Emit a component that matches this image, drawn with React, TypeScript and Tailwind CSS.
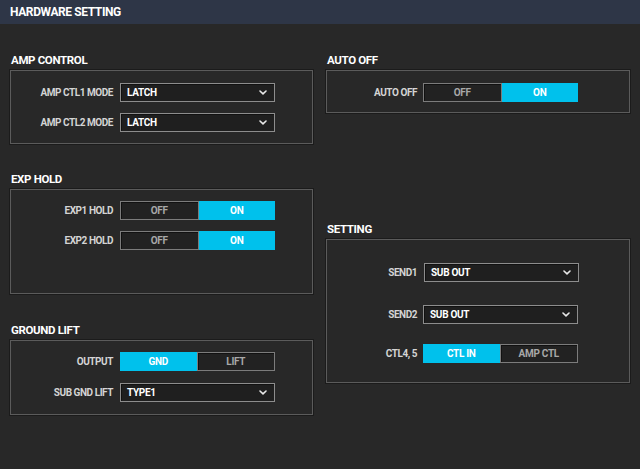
import { ReactNode } from 'react'

const FONT = "font-['Roboto','Liberation_Sans',sans-serif]"

function Chevron() {
  return (
    <svg width="8" height="5" viewBox="0 0 8 5" className="shrink-0">
      <path d="M1 1 L4 3.8 L7 1" fill="none" stroke="#e8e8e8" strokeWidth="1.6" strokeLinecap="round" strokeLinejoin="round" />
    </svg>
  )
}

function Select({ value }: { value: string }) {
  return (
    <div className="flex h-[19px] w-[155px] items-center justify-between border border-[#8d8d8d] bg-[#1f1f1f] pr-[7px] pl-[6px] shadow-[inset_1px_1px_0_#111]">
      <span className="text-[10px] font-bold tracking-[-0.3px] text-white">{value}</span>
      <Chevron />
    </div>
  )
}

function Toggle({ left, right, active }: { left: string; right: string; active: 'left' | 'right' }) {
  const on = 'bg-[#00c1ec] text-white'
  const off = 'border border-[#7c7c7c] bg-[#222] text-[#a8a8a8] shadow-[inset_1px_1px_0_#111]'
  return (
    <div className="flex h-[19px] w-[155px] text-[10px] font-bold tracking-[-0.3px]">
      <div className={`flex flex-1 items-center justify-center ${active === 'left' ? on : off}`}>{left}</div>
      <div className={`flex flex-1 items-center justify-center ${active === 'right' ? on : off}`}>{right}</div>
    </div>
  )
}

function Row({ label, labelW, children, className = '' }: { label: string; labelW: string; children: ReactNode; className?: string }) {
  return (
    <div className={`flex items-center ${className}`}>
      <div className={`${labelW} text-right text-[10px] font-bold tracking-[-0.45px] text-[#d4d4d4]`}>{label}</div>
      {children}
    </div>
  )
}

function Section({ title, boxClass, children, className = '' }: { title: string; boxClass: string; children: ReactNode; className?: string }) {
  return (
    <div className={className}>
      <div className="h-[17px] pl-px text-[11.5px] leading-[15px] font-bold tracking-[-0.35px] text-white">{title}</div>
      <div className={`border border-[#5b5b5b] shadow-[0_0_0_1px_#1b1b1b] ${boxClass}`}>{children}</div>
    </div>
  )
}

export default function App() {
  return (
    <div className={`h-[469px] w-[640px] bg-[#282828] ${FONT}`}>
      <div className="flex h-[24px] items-center bg-[#2e3647] pl-[10px] text-[12px] font-bold tracking-[-0.4px] text-white">
        HARDWARE SETTING
      </div>
      <div className="flex gap-[13px] px-[10px] pt-[29px]">
        <div className="w-[303px]">
          <Section title="AMP CONTROL" boxClass="h-[74px] pt-[12px]">
            <Row label="AMP CTL1 MODE" labelW="w-[102px] mr-[7px]">
              <Select value="LATCH" />
            </Row>
            <Row label="AMP CTL2 MODE" labelW="w-[102px] mr-[7px]" className="mt-[11px]">
              <Select value="LATCH" />
            </Row>
          </Section>
          <Section title="EXP HOLD" boxClass="h-[105px] pt-[11px]" className="mt-[28px]">
            <Row label="EXP1 HOLD" labelW="w-[102px] mr-[7px]">
              <Toggle left="OFF" right="ON" active="right" />
            </Row>
            <Row label="EXP2 HOLD" labelW="w-[102px] mr-[7px]" className="mt-[11px]">
              <Toggle left="OFF" right="ON" active="right" />
            </Row>
          </Section>
          <Section title="GROUND LIFT" boxClass="h-[75px] pt-[11px]" className="mt-[29px]">
            <Row label="OUTPUT" labelW="w-[102px] mr-[7px]">
              <Toggle left="GND" right="LIFT" active="left" />
            </Row>
            <Row label="SUB GND LIFT" labelW="w-[102px] mr-[7px]" className="mt-[12px]">
              <Select value="TYPE1" />
            </Row>
          </Section>
        </div>
        <div className="w-[304px]">
          <Section title="AUTO OFF" boxClass="h-[43px] pt-[12px]">
            <Row label="AUTO OFF" labelW="w-[90px] mr-[6px]">
              <Toggle left="OFF" right="ON" active="right" />
            </Row>
          </Section>
          <Section title="SETTING" boxClass="h-[144px] pt-[23px]" className="mt-[109px]">
            <Row label="SEND1" labelW="w-[90px] mr-[7px]">
              <Select value="SUB OUT" />
            </Row>
            <Row label="SEND2" labelW="w-[90px] mr-[6px]" className="mt-[23px]">
              <Select value="SUB OUT" />
            </Row>
            <Row label="CTL4, 5" labelW="w-[90px] mr-[6px]" className="mt-[20px]">
              <Toggle left="CTL IN" right="AMP CTL" active="left" />
            </Row>
          </Section>
        </div>
      </div>
    </div>
  )
}
